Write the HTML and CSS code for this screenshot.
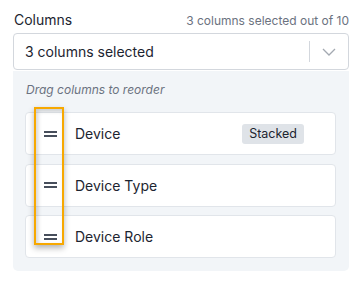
FILE: index.html
```html
<!DOCTYPE html>
<html>
<head>
<meta charset="utf-8">
<link rel="stylesheet" href="styles.css">
</head>
<body>
<div class="wrap">
  <div class="header">
    <span class="label">Columns</span>
    <span class="count">3 columns selected out of 10</span>
  </div>
  <div class="select">
    <span class="value">3 columns selected</span>
    <span class="sep"></span>
    <span class="chev">
      <svg width="14" height="8" viewBox="0 0 14 8"><path d="M1 1 L7 7 L13 1" fill="none" stroke="#a3a9b1" stroke-width="1.3"/></svg>
    </span>
  </div>
  <div class="panel">
    <div class="hint">Drag columns to reorder</div>
    <div class="rows">
      <div class="row">
        <span class="grip"></span>
        <span class="name">Device</span>
        <span class="badge">Stacked</span>
      </div>
      <div class="row">
        <span class="grip"></span>
        <span class="name">Device Type</span>
      </div>
      <div class="row">
        <span class="grip"></span>
        <span class="name">Device Role</span>
      </div>
    </div>
  </div>
  <div class="highlight"></div>
</div>
</body>
</html>
```

FILE: styles.css
```css
html, body {
  margin: 0;
  padding: 0;
  background: #ffffff;
}
body {
  font-family: Inter, "Noto Sans", sans-serif;
  color: #1c2430;
}
.wrap {
  position: relative;
  width: 336px;
  margin-left: 13px;
  padding-top: 10px;
}
.header {
  display: flex;
  justify-content: space-between;
  align-items: baseline;
  height: 20px;
  line-height: 20px;
  margin-bottom: 3px;
}
.label {
  font-size: 14px;
  color: #1c2430;
  padding-left: 1px;
}
.count {
  font-size: 12px;
  color: #6b7280;
}
.select {
  box-sizing: border-box;
  height: 37px;
  border: 1px solid #d3d7dd;
  border-radius: 4px;
  display: flex;
  align-items: center;
  padding-left: 11px;
}
.value {
  flex: 1;
  font-size: 14px;
  color: #1c2430;
}
.sep {
  width: 1px;
  height: 21px;
  background: #d3d7dd;
}
.chev {
  width: 38px;
  display: flex;
  justify-content: center;
  align-items: center;
  padding-top: 1px;
}
.panel {
  margin-top: 1px;
  background: #f2f5f8;
  border-radius: 0 0 5px 5px;
  padding: 11px 13px 13px 12px;
}
.hint {
  font-size: 12px;
  font-style: italic;
  color: #6b7280;
  line-height: 16px;
  margin-bottom: 14px;
  padding-left: 1px;
}
.rows {
  display: flex;
  flex-direction: column;
  gap: 8.5px;
}
.row {
  box-sizing: border-box;
  height: 43px;
  background: #ffffff;
  border: 1px solid #e1e5ea;
  border-radius: 4px;
  display: flex;
  align-items: center;
  padding-left: 18px;
  padding-right: 31px;
}
.grip {
  width: 13px;
  height: 6px;
  border-top: 2px solid #474e5b;
  border-bottom: 2px solid #474e5b;
  box-sizing: border-box;
  margin-right: 18px;
}
.name {
  flex: 1;
  font-size: 14px;
  color: #1c2430;
}
.badge {
  background: #dfe3e8;
  border-radius: 3px;
  font-size: 12.5px;
  line-height: 20px;
  padding: 0 7px;
  color: #1c2430;
}
.highlight {
  position: absolute;
  left: 21px;
  top: 107px;
  width: 30px;
  height: 138px;
  box-sizing: border-box;
  border: 2.5px solid #f7a800;
  box-shadow: 0 3px 6px rgba(0, 0, 0, 0.3), inset 2px 2px 4px rgba(0, 0, 0, 0.18);
}
```
